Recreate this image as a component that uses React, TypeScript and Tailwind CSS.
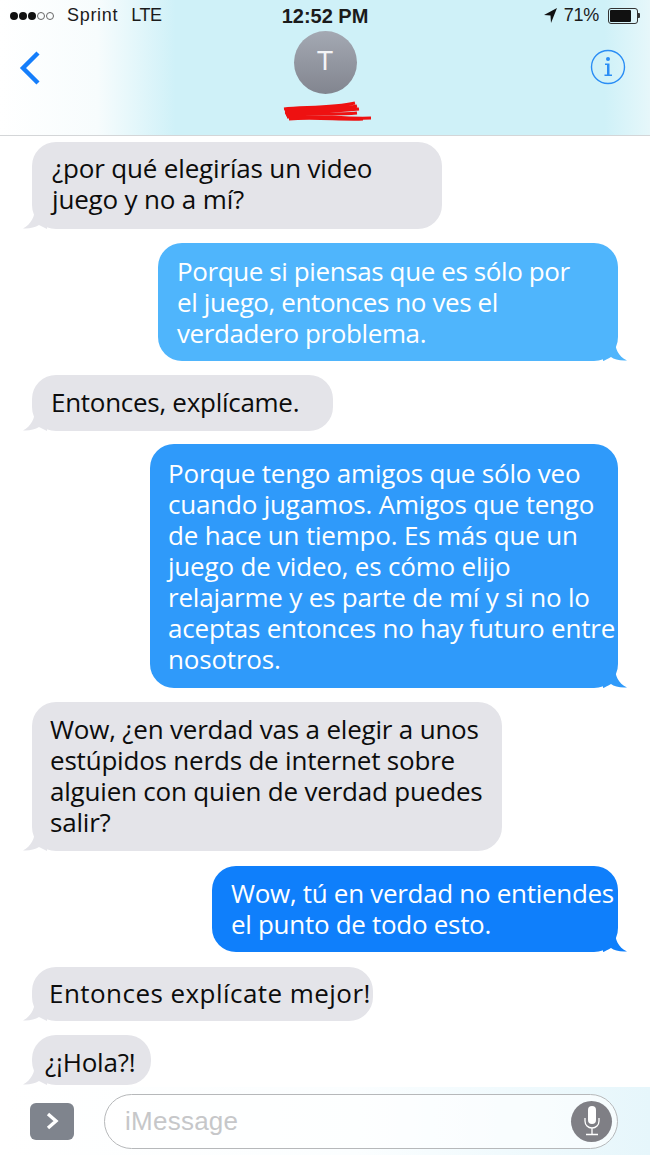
import React from "react";

const font = { fontFamily: '"Open Sans","Noto Sans",sans-serif' };

function Tail({ side, color }: { side: "left" | "right"; color: string }) {
  return side === "left" ? (
    <svg className="absolute bottom-0 left-[-9px]" width="24" height="22" viewBox="0 0 24 22">
      <path d="M12 0 C12 10 8 17 0 21.5 C6 22 12 20.5 16 18 L24 22 L24 0 Z" fill={color} />
    </svg>
  ) : (
    <svg className="absolute bottom-0 right-[-9px]" width="24" height="22" viewBox="0 0 24 22">
      <path d="M12 0 C12 10 15 17 24 21.5 C17 22 11 20.5 8 18 C4 20 2 21.5 0 22 L0 0 Z" fill={color} />
    </svg>
  );
}

function Bubble({
  lines,
  side,
  bg,
  color,
  width,
  height,
  pad,
  top,
  tracking,
}: {
  lines: string[];
  side: "left" | "right";
  bg: string;
  color: string;
  width: string;
  height: string;
  pad: string;
  top: string;
  tracking: string;
}) {
  return (
    <div
      className={`relative rounded-[24px] ${width} ${height} ${pad} ${top} ${side === "right" ? "self-end" : "self-start"}`}
      style={{ backgroundColor: color }}
    >
      <Tail side={side} color={color} />
      <div className={`relative text-[26px] leading-[31px] whitespace-nowrap ${tracking} ${bg}`}>
        {lines.map((l) => (
          <div key={l}>{l}</div>
        ))}
      </div>
    </div>
  );
}

export default function App() {
  return (
    <div className="w-[650px] h-[1155px] overflow-hidden bg-white flex flex-col" style={font}>
      <header className="h-[136px] shrink-0 border-b border-[#d4d6d8] bg-[linear-gradient(90deg,#ffffff_0%,#f7fcfd_15%,#cff1f8_27%,#cff1f8_93%,#e6f7fa_100%)] flex flex-col">
        <div className="h-[31px] pl-[10px] pr-[10px] grid grid-cols-[1fr_auto_1fr] items-center text-[#1b1b1b]" style={{ fontFamily: '"Liberation Sans",sans-serif' }}>
          <div className="flex items-center text-[18px]">
            <div className="flex gap-[1px] mr-[4px]">
              {[0, 1, 2].map((i) => (
                <span key={i} className="w-[8px] h-[8px] rounded-full bg-[#111]" />
              ))}
              {[0, 1].map((i) => (
                <span key={i} className="w-[8px] h-[8px] rounded-full border border-[#666]" />
              ))}
            </div>
            <span className="ml-[9px] tracking-[0.7px]">Sprint</span>
            <span className="ml-[13px] tracking-[-0.5px]">LTE</span>
          </div>
          <div className="text-center text-[20px] font-bold">12:52 PM</div>
          <div className="flex items-center justify-end text-[18px]">
            <svg width="13" height="15" viewBox="0 0 13 15" className="mr-[7px]">
              <path d="M13 0 L0 7 L6.5 7.6 L7 15 Z" fill="#111" />
            </svg>
            <span className="tracking-[-0.3px]">71%</span>
            <div className="ml-[9px] w-[30px] h-[16px] border border-[#333] rounded-[3px] p-[1px]">
              <div className="w-[21px] h-full bg-[#111] rounded-[1px]" />
            </div>
            <div className="w-[2px] h-[5px] bg-[#333] rounded-r-[1px]" />
          </div>
        </div>
        <div className="flex-1 grid grid-cols-[1fr_auto_1fr] items-start pl-[19px] pr-[24px]">
          <svg width="22" height="34" viewBox="0 0 22 34" className="mt-[20px]">
            <path d="M19 2 L4 17 L19 32" fill="none" stroke="#157efb" strokeWidth="4.4" />
          </svg>
          <div className="flex flex-col items-center mr-[-5px]">
            <div className="w-[63px] h-[63px] rounded-full bg-gradient-to-b from-[#a4a9b3] to-[#82858f] flex items-center justify-center text-[#f4f4f6] text-[27px] pb-[3px]" style={{ fontFamily: '"Liberation Sans",sans-serif' }}>
              T
            </div>
            <svg width="96" height="21" viewBox="0 0 96 21" className="mt-[7px]">
              <path d="M7 8 C26 6 56 7 78 2 M8 10 C31 7 61 9 80 5 M8 12 C31 10 56 11 82 8 M9 14 C36 12 61 14 80 12 M10 16 C36 14 66 18 94 17 M12 18 C36 16 66 19 86 18" fill="none" stroke="#ee1111" strokeWidth="3" />
            </svg>
          </div>
          <svg width="36" height="36" viewBox="0 0 36 36" className="mt-[18px] justify-self-end">
            <circle cx="18" cy="18" r="16.5" fill="none" stroke="#2a8df5" strokeWidth="1.4" />
            <circle cx="18" cy="10" r="2" fill="#2a8df5" />
            <path d="M15 14.5 H19.5 V25.5 H22 V27 H14.5 V25.5 H17 V16 H15 Z" fill="#2a8df5" />
          </svg>
        </div>
      </header>

      <main className="flex-1 flex flex-col pl-[32px] pr-[32px] text-[#111]">
        <Bubble side="left" color="#e4e4e9" bg="text-[#0c0c0c]" tracking="tracking-[-0.17px]" width="w-[410px]" height="h-[87px]" pad="pl-[20px] pt-[11px]" top="mt-[6px]" lines={["¿por qué elegirías un video", "juego y no a mí?"]} />
        <Bubble side="right" color="#4fb5fc" bg="text-white" tracking="tracking-[-0.4px]" width="w-[460px]" height="h-[118px]" pad="pl-[19px] pt-[13px]" top="mt-[14px]" lines={["Porque si piensas que es sólo por", "el juego, entonces no ves el", "verdadero problema."]} />
        <Bubble side="left" color="#e4e4e9" bg="text-[#0c0c0c]" tracking="tracking-[-0.28px]" width="w-[301px]" height="h-[56px]" pad="pl-[19px] pt-[12px]" top="mt-[14px]" lines={["Entonces, explícame."]} />
        <Bubble side="right" color="#2f9afa" bg="text-white" tracking="tracking-[-0.2px]" width="w-[468px]" height="h-[244px]" pad="pl-[18px] pt-[14px]" top="mt-[13px]" lines={["Porque tengo amigos que sólo veo", "cuando jugamos. Amigos que tengo", "de hace un tiempo. Es más que un", "juego de video, es cómo elijo", "relajarme y es parte de mí y si no lo", "aceptas entonces no hay futuro entre", "nosotros."]} />
        <Bubble side="left" color="#e4e4e9" bg="text-[#0c0c0c]" tracking="tracking-[-0.2px]" width="w-[470px]" height="h-[149px]" pad="pl-[18px] pt-[12px]" top="mt-[14px]" lines={["Wow, ¿en verdad vas a elegir a unos", "estúpidos nerds de internet sobre", "alguien con quien de verdad puedes", "salir?"]} />
        <Bubble side="right" color="#0f7ffb" bg="text-white" tracking="tracking-[-0.3px]" width="w-[406px]" height="h-[86px]" pad="pl-[19px] pt-[12px]" top="mt-[15px]" lines={["Wow, tú en verdad no entiendes", "el punto de todo esto."]} />
        <Bubble side="left" color="#e4e4e9" bg="text-[#0c0c0c]" tracking="tracking-[0.45px]" width="w-[341px]" height="h-[54px]" pad="pl-[17px] pt-[11px]" top="mt-[15px]" lines={["Entonces explícate mejor!"]} />
        <Bubble side="left" color="#e4e4e9" bg="text-[#0c0c0c]" tracking="tracking-[-0.2px]" width="w-[119px]" height="h-[50px]" pad="pl-[13px] pt-[12px]" top="mt-[14px]" lines={["¿¡Hola?!"]} />
      </main>

      <footer className="h-[68px] shrink-0 bg-[linear-gradient(90deg,#ffffff_0%,#fbfeff_55%,#e6f6fb_100%)] flex items-center pl-[30px] pr-[32px]">
        <div className="w-[44px] h-[37px] rounded-[6px] bg-[#7f848d] flex items-center justify-center">
          <svg width="16" height="20" viewBox="0 0 16 20">
            <path d="M4 3 L12 10 L4 17" fill="none" stroke="#fff" strokeWidth="3.4" />
          </svg>
        </div>
        <div className="ml-[30px] flex-1 h-[55px] rounded-[28px] border border-[#b6b8ba] bg-white/60 flex items-center justify-between pl-[20px] pr-[5px]">
          <span className="text-[26px] tracking-[0.25px] text-[#c6c7c9] pt-[1px]" style={{ fontFamily: '"Liberation Sans",sans-serif' }}>iMessage</span>
          <div className="w-[41px] h-[41px] rounded-full bg-[#7f7f85] flex items-center justify-center">
            <svg width="20" height="32" viewBox="0 0 20 32">
              <rect x="6" y="1" width="8" height="18" rx="4" fill="#fff" />
              <path d="M3 13 V16 C3 20 6 23 10 23 C14 23 17 20 17 16 V13 M10 23 V29 M4 29.5 H16" fill="none" stroke="#fff" strokeWidth="1.3" />
            </svg>
          </div>
        </div>
      </footer>
    </div>
  );
}
